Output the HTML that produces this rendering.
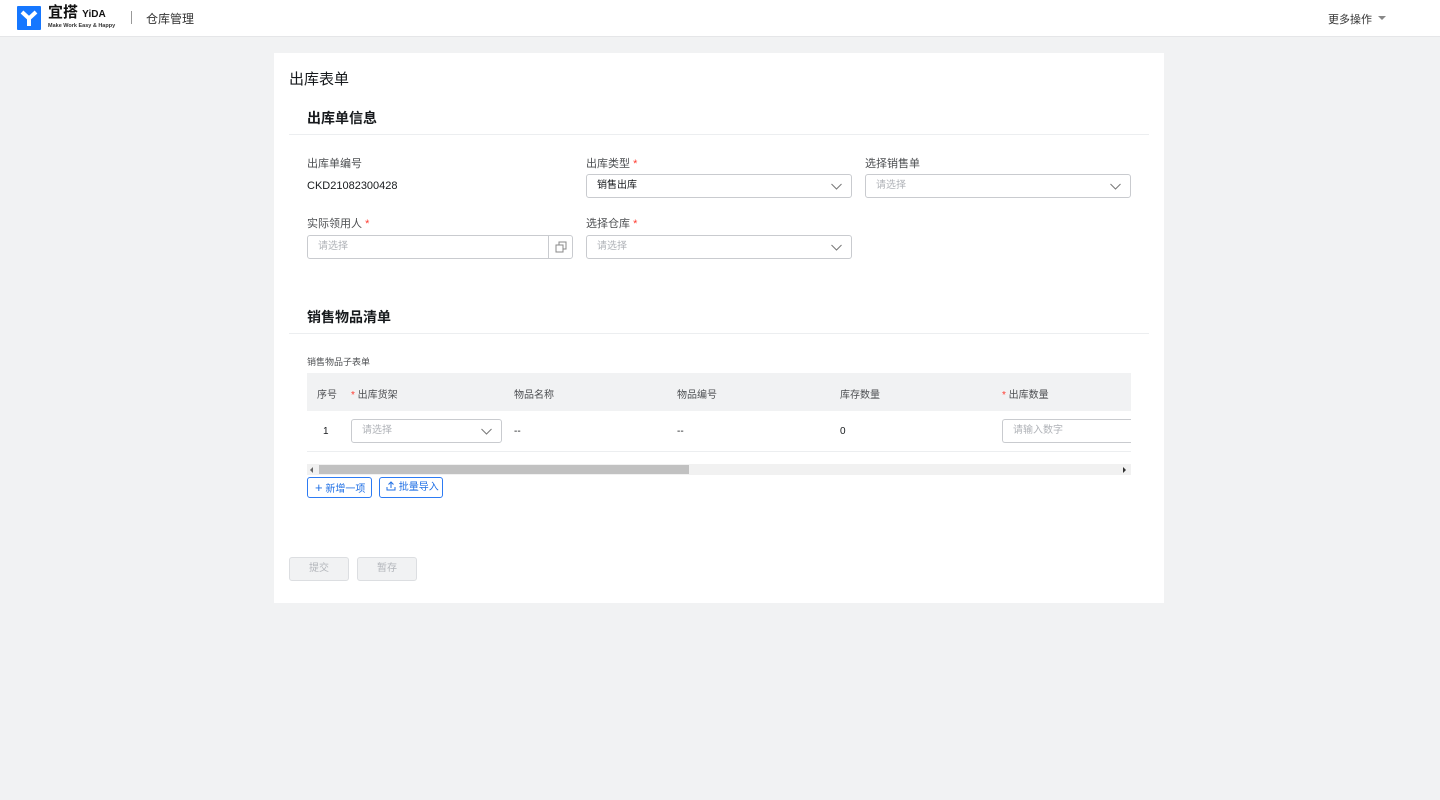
<!DOCTYPE html>
<html><head><meta charset="utf-8"><style>
*{box-sizing:border-box;margin:0;padding:0}
body{width:1440px;height:800px;background:#f1f2f3;font-family:"Liberation Sans","Noto Sans CJK SC",sans-serif;color:#171a1d;position:relative;overflow:hidden}
.abs{position:absolute}
.hdr{left:0;top:0;width:1440px;height:37px;background:#fff;border-bottom:1px solid #e5e6e8}
.card{left:274px;top:53px;width:890px;height:550px;background:#fff}
.lbl{font-size:11px;color:#4d4f52}
.req{color:#ff3b30}
.inp{height:24px;border:1px solid #c9cbcf;border-radius:3px;background:#fff;font-size:10px;color:#b0b3b8;padding-left:10px;line-height:22px}
.chev{position:absolute;right:9px;top:8px;width:11px;height:7px}
.sec{font-size:14px;font-weight:bold;color:#171a1d}
.line{height:1px;background:#eceef0}
.th{font-size:10px;color:#4d4f52}
.btn{height:21px;border:1px solid #2d7bf3;border-radius:3px;color:#1f6fe5;font-size:10px;line-height:19px;background:#fff}
.gbtn{height:24px;border:1px solid #dcdee1;border-radius:3px;background:#f1f2f3;color:#b3b6bb;font-size:10px;line-height:22px;text-align:center}
</style></head><body>
<div class="abs hdr">
  <svg class="abs" style="left:17px;top:6px" width="24" height="24" viewBox="0 0 24 24"><rect width="24" height="24" rx="1" fill="#1677ff"/><path d="M5 6 L12 12.5 L19 6 M12 12.5 V20" stroke="#fff" stroke-width="4" fill="none"/></svg>
  <div class="abs" style="left:48px;top:4px;font-size:15px;line-height:17px;font-weight:bold;color:#111;white-space:nowrap">宜搭 <span style="font-size:10px">YiDA</span></div>
  <div class="abs" style="left:48px;top:23px;font-size:5.5px;line-height:6px;font-weight:bold;color:#333;white-space:nowrap">Make Work Easy &amp; Happy</div>
  <div class="abs" style="left:131px;top:11px;width:1px;height:13px;background:#999"></div>
  <div class="abs" style="left:146px;top:10px;font-size:12px;color:#333">仓库管理</div>
  <div class="abs" style="left:1328px;top:11px;font-size:11px;color:#333">更多操作</div>
  <div class="abs" style="left:1378px;top:16px;border:4px solid transparent;border-top:4px solid #888"></div>
</div>
<div class="abs card"></div>
<div class="abs" style="left:289px;top:68px;font-size:15px">出库表单</div>
<div class="abs sec" style="left:307px;top:108px">出库单信息</div>
<div class="abs line" style="left:289px;top:134px;width:860px"></div>

<div class="abs lbl" style="left:307px;top:155px">出库单编号</div>
<div class="abs" style="left:307px;top:180px;font-size:11px;color:#171a1d">CKD21082300428</div>
<div class="abs lbl" style="left:586px;top:155px">出库类型 <span class="req">*</span></div>
<div class="abs inp" style="left:586px;top:174px;width:266px;color:#171a1d">销售出库<svg class="chev" viewBox="0 0 11 7"><path d="M0.5 1 L5.5 6 L10.5 1" stroke="#777" fill="none"/></svg></div>
<div class="abs lbl" style="left:865px;top:155px">选择销售单</div>
<div class="abs inp" style="left:865px;top:174px;width:266px">请选择<svg class="chev" viewBox="0 0 11 7"><path d="M0.5 1 L5.5 6 L10.5 1" stroke="#777" fill="none"/></svg></div>

<div class="abs lbl" style="left:307px;top:215px">实际领用人 <span class="req">*</span></div>
<div class="abs inp" style="left:307px;top:235px;width:266px">请选择<div class="abs" style="right:0;top:0;width:24px;height:22px;border-left:1px solid #c9cbcf"><svg style="position:absolute;left:6px;top:5px" width="12" height="12" viewBox="0 0 12 12"><rect x="1" y="4" width="7" height="7" fill="none" stroke="#888"/><path d="M4 4V1H11V8H8" fill="none" stroke="#888"/></svg></div></div>
<div class="abs lbl" style="left:586px;top:215px">选择仓库 <span class="req">*</span></div>
<div class="abs inp" style="left:586px;top:235px;width:266px">请选择<svg class="chev" viewBox="0 0 11 7"><path d="M0.5 1 L5.5 6 L10.5 1" stroke="#777" fill="none"/></svg></div>

<div class="abs sec" style="left:307px;top:307px">销售物品清单</div>
<div class="abs line" style="left:289px;top:333px;width:860px"></div>
<div class="abs" style="left:307px;top:355px;font-size:9px;color:#4d4f52">销售物品子表单</div>
<div class="abs" style="left:307px;top:373px;width:824px;height:38px;background:#f1f2f3"></div>
<div class="abs th" style="left:317px;top:386px">序号</div>
<div class="abs th" style="left:351px;top:386px"><span class="req">*</span> 出库货架</div>
<div class="abs th" style="left:514px;top:386px">物品名称</div>
<div class="abs th" style="left:677px;top:386px">物品编号</div>
<div class="abs th" style="left:840px;top:386px">库存数量</div>
<div class="abs th" style="left:1002px;top:386px"><span class="req">*</span> 出库数量</div>
<div class="abs" style="left:323px;top:426px;font-size:10px">1</div>
<div class="abs inp" style="left:351px;top:419px;width:151px">请选择<svg class="chev" viewBox="0 0 11 7"><path d="M0.5 1 L5.5 6 L10.5 1" stroke="#777" fill="none"/></svg></div>
<div class="abs" style="left:514px;top:426px;font-size:10px">--</div>
<div class="abs" style="left:677px;top:426px;font-size:10px">--</div>
<div class="abs" style="left:840px;top:426px;font-size:10px">0</div>
<div class="abs inp" style="left:1002px;top:419px;width:129px;border-right:none;border-radius:3px 0 0 3px">请输入数字</div>
<div class="abs line" style="left:307px;top:451px;width:824px"></div>
<div class="abs" style="left:307px;top:464px;width:824px;height:11px;background:#f1f1f1"></div>
<div class="abs" style="left:319px;top:465px;width:370px;height:9px;background:#c1c1c1"></div>
<div class="abs" style="left:310px;top:467px;border:3px solid transparent;border-right:3px solid #666;border-left:none"></div>
<div class="abs" style="left:1123px;top:467px;border:3px solid transparent;border-left:3px solid #333;border-right:none"></div>
<div class="abs btn" style="left:307px;top:477px;width:65px;padding-left:7px"><span style="font-size:13px">+</span> 新增一项</div>
<div class="abs btn" style="left:379px;top:477px;width:64px;padding-left:6px"><svg width="10" height="10" viewBox="0 0 10 10" style="vertical-align:-1px"><path d="M1 6V9H9V6M5 7V1M2.5 3.5L5 1L7.5 3.5" stroke="#1f6fe5" fill="none"/></svg> 批量导入</div>
<div class="abs gbtn" style="left:289px;top:557px;width:60px">提交</div>
<div class="abs gbtn" style="left:357px;top:557px;width:60px">暂存</div>
</body></html>
